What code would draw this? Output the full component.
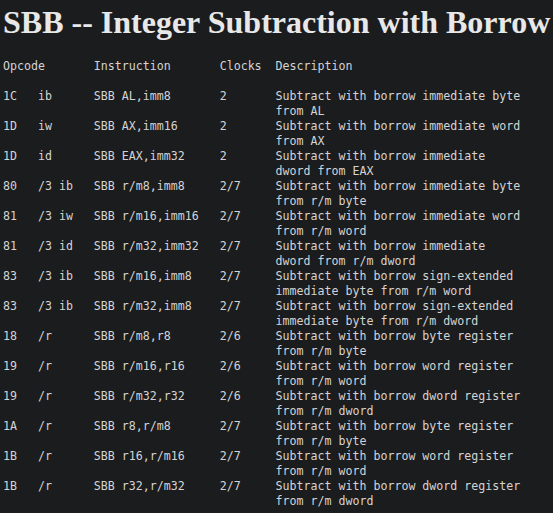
const LINES = [
  'Opcode       Instruction       Clocks  Description',
  '',
  '1C   ib      SBB AL,imm8       2       Subtract with borrow immediate byte',
  '                                       from AL',
  '1D   iw      SBB AX,imm16      2       Subtract with borrow immediate word',
  '                                       from AX',
  '1D   id      SBB EAX,imm32     2       Subtract with borrow immediate',
  '                                       dword from EAX',
  '80   /3 ib   SBB r/m8,imm8     2/7     Subtract with borrow immediate byte',
  '                                       from r/m byte',
  '81   /3 iw   SBB r/m16,imm16   2/7     Subtract with borrow immediate word',
  '                                       from r/m word',
  '81   /3 id   SBB r/m32,imm32   2/7     Subtract with borrow immediate',
  '                                       dword from r/m dword',
  '83   /3 ib   SBB r/m16,imm8    2/7     Subtract with borrow sign-extended',
  '                                       immediate byte from r/m word',
  '83   /3 ib   SBB r/m32,imm8    2/7     Subtract with borrow sign-extended',
  '                                       immediate byte from r/m dword',
  '18   /r      SBB r/m8,r8       2/6     Subtract with borrow byte register',
  '                                       from r/m byte',
  '19   /r      SBB r/m16,r16     2/6     Subtract with borrow word register',
  '                                       from r/m word',
  '19   /r      SBB r/m32,r32     2/6     Subtract with borrow dword register',
  '                                       from r/m dword',
  '1A   /r      SBB r8,r/m8       2/7     Subtract with borrow byte register',
  '                                       from r/m byte',
  '1B   /r      SBB r16,r/m16     2/7     Subtract with borrow word register',
  '                                       from r/m word',
  '1B   /r      SBB r32,r/m32     2/7     Subtract with borrow dword register',
  '                                       from r/m dword',
]

export default function App() {
  return (
    <div className="min-h-screen bg-[#1b1c1e] pl-[3px] overflow-hidden">
      <h1 className="-mt-[2px] font-['Liberation_Serif',serif] text-[32px] font-bold leading-normal text-[#e8e8e8] whitespace-nowrap">
        SBB -- Integer Subtraction with Borrow
      </h1>
      <pre className="mt-[13px] font-['DejaVu_Sans_Mono',monospace] text-[11.62px] leading-[15px] text-[#d4d4d4]">
        {LINES.join('\n')}
      </pre>
    </div>
  )
}
